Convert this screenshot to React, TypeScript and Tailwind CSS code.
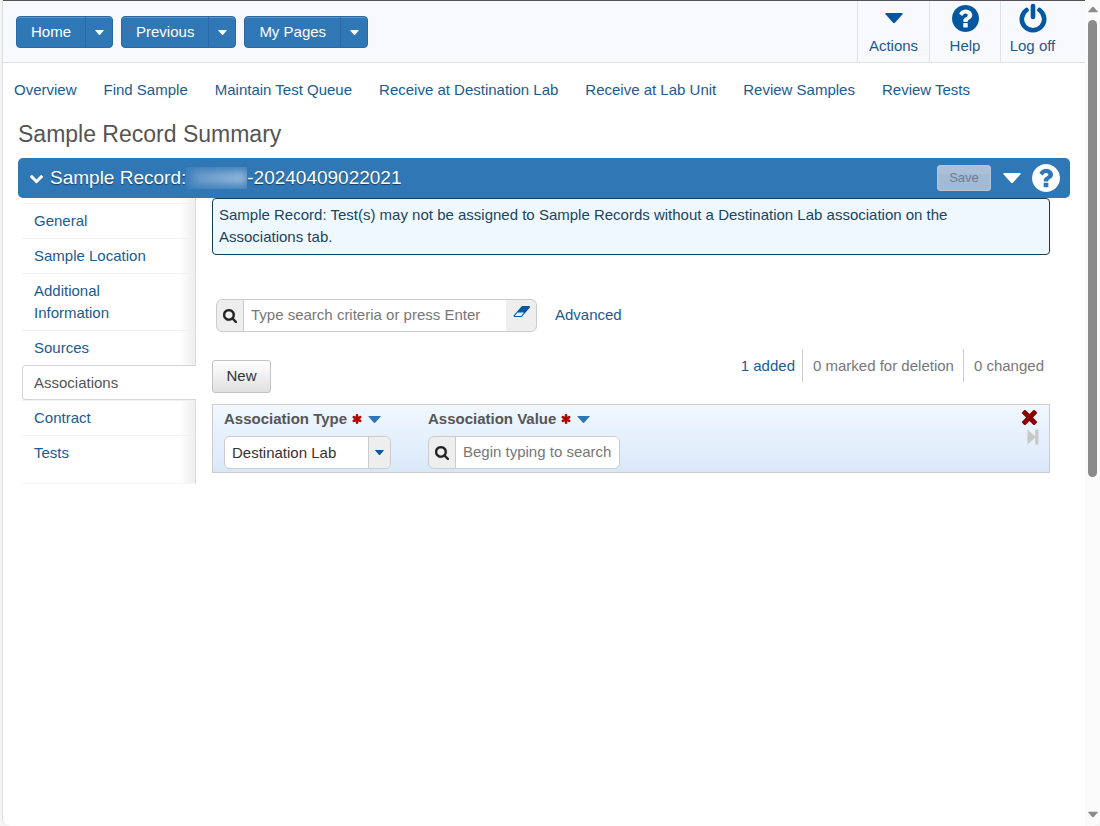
import React, { useState } from "react";

type IconProps = { className?: string };

const navButtons = ["Home", "Previous", "My Pages"];

const quickLinks = [
  "Overview",
  "Find Sample",
  "Maintain Test Queue",
  "Receive at Destination Lab",
  "Receive at Lab Unit",
  "Review Samples",
  "Review Tests",
];

const tabs = ["General", "Sample Location", "Additional Information", "Sources", "Associations", "Contract", "Tests"];

const Caret = ({ className }: IconProps) => (
  <svg viewBox="0 0 18 10" className={className} fill="currentColor" aria-hidden="true">
    <path d="M1 0H17Q18.500 0 17.500 1.200L10.200 9.400Q9 10.500 7.800 9.400L.5 1.200Q-.5 0 1 0Z" />
  </svg>
);

const SearchIcon = ({ className }: IconProps) => (
  <svg viewBox="64 128 1664 1664" className={className} fill="currentColor" stroke="currentColor" strokeWidth="30" aria-hidden="true">
    <path d="M1216 832q0-185-131.500-316.500t-316.500-131.500-316.500 131.500-131.500 316.500 131.500 316.500 316.500 131.500 316.500-131.500 131.500-316.500zm512 832q0 52-38 90t-90 38q-54 0-90-38l-343-342q-179 124-399 124-143 0-273.500-55.500t-225-150-150-225-55.500-273.500 55.500-273.500 150-225 225-150 273.500-55.500 273.500 55.500 225 150 150 225 55.500 273.500q0 220-124 399l343 343q37 37 37 90z" />
  </svg>
);

const ChevronIcon = ({ className }: IconProps) => (
  <svg viewBox="0 300 1792 1340" className={className} fill="currentColor" aria-hidden="true">
    <path d="M1683 808l-742 741q-19 19-45 19t-45-19l-742-741q-19-19-19-45.500t19-45.500l166-165q19-19 45-19t45 19l531 531 531-531q19-19 45-19t45 19l166 165q19 19 19 45.500t-19 45.500z" />
  </svg>
);

const HelpIcon = ({ className }: IconProps) => (
  <svg viewBox="128 128 1536 1536" className={className} fill="currentColor" aria-hidden="true">
    <path d="M1024 1376v-192q0-14-9-23t-23-9h-192q-14 0-23 9t-9 23v192q0 14 9 23t23 9h192q14 0 23-9t9-23zm256-672q0-88-55.500-163t-138.500-116-170-41q-243 0-371 213-15 24 8 42l132 100q7 6 19 6 16 0 25-12 53-68 86-92 34-24 86-24 48 0 85.500 26t37.500 59q0 38-20 61t-68 45q-63 28-115.500 86.500t-52.500 125.500v36q0 14 9 23t23 9h192q14 0 23-9t9-23q0-19 21.500-49.500t54.500-49.500q32-18 49-28.500t46-35 44.500-48 28-60.500 12.500-81zm384 192q0 209-103 385.500t-279.500 279.500-385.500 103-385.500-103-279.500-279.500-103-385.500 103-385.500 279.500-279.500 385.500-103 385.500 103 279.500 279.500 103 385.500z" />
  </svg>
);

const PowerIcon = ({ className }: IconProps) => (
  <svg viewBox="0 0 28 30" className={className} fill="none" stroke="currentColor" strokeWidth="4.600" strokeLinecap="round" aria-hidden="true">
    <path d="M14 3v11M7.500 7A11.200 11.200 0 1 0 20.500 7" />
  </svg>
);

const AsteriskIcon = ({ className }: IconProps) => (
  <svg viewBox="0 0 16 16" className={className} stroke="currentColor" strokeWidth="4" strokeLinecap="round" aria-hidden="true">
    <path d="M8 2v12M2.800 5l10.400 6M13.200 5L2.800 11" />
  </svg>
);

const EraserIcon = ({ className }: IconProps) => (
  <svg viewBox="0 256 1984 1280" className={className} fill="currentColor" aria-hidden="true">
    <path d="M960 1408l336-384h-768l-336 384h768zm1013-1077q15 34 9.500 71.500t-30.500 65.500l-896 1024q-38 44-96 44h-768q-38 0-69.500-20.500t-47.500-54.500q-15-34-9.500-71.500t30.500-65.500l896-1024q38-44 96-44h768q38 0 69.500 20.500t47.500 54.500z" />
  </svg>
);

const CrossIcon = ({ className }: IconProps) => (
  <svg viewBox="302 366 1188 1188" className={className} fill="currentColor" aria-hidden="true">
    <path d="M1490 1322q0 40-28 68l-136 136q-28 28-68 28t-68-28l-294-294-294 294q-28 28-68 28t-68-28l-136-136q-28-28-28-68t28-68l294-294-294-294q-28-28-28-68t28-68l136-136q28-28 68-28t68 28l294 294 294-294q28-28 68-28t68 28l136 136q28 28 28 68t-28 68l-294 294 294 294q28 28 28 68z" />
  </svg>
);

const StepIcon = ({ className }: IconProps) => (
  <svg viewBox="0 0 12 16" className={className} fill="currentColor" aria-hidden="true">
    <path d="M.5.4v15.200L8.200 8.600V15.500h3.300V.5H8.200v6.900z" />
  </svg>
);

const FieldLabel = ({ id, text }: { id: string; text: string }) => (
  <div className="flex items-center">
    <label htmlFor={id} className="font-bold text-[#555]">
      {text}
    </label>
    <AsteriskIcon className="ml-[5px] size-[10px] text-[#b30000]" />
    <button type="button" aria-label={`${text} options`} className="ml-[6px] text-[#2f76b5]">
      <Caret className="h-[7px] w-[13px]" />
    </button>
  </div>
);

const Header = () => (
  <header className="flex justify-between border-t border-b border-t-[#55525a] border-b-[#e0e3e6] bg-[#f8f9fc]">
    <div className="flex gap-2 pt-[15px] pl-[13px]">
      {navButtons.map((name) => (
        <div
          key={name}
          className="flex h-8 rounded border border-[#2a69a5] bg-[#3077b6] text-white shadow-[inset_0_1px_0_#5c95c8] [text-shadow:0_1px_1px_rgba(0,0,0,.5)]">
          <button type="button" className="px-[14px]">
            {name}
          </button>
          <button type="button" aria-label={`${name} menu`} className="flex w-[27px] items-center justify-center border-l border-[#2a69a5]">
            <Caret className="h-[5px] w-[9px]" />
          </button>
        </div>
      ))}
    </div>
    <div className="flex h-[61px] pr-[21px] text-[#1c5a90]">
      <button type="button" className="flex w-[72px] flex-col items-center border-l border-[#e0e3e6]">
        <span className="flex h-[34px] items-center text-[#02579e]">
          <Caret className="h-[10px] w-[18px]" />
        </span>
        Actions
      </button>
      <button type="button" className="flex w-[71px] flex-col items-center border-l border-[#e0e3e6]">
        <span className="flex h-[34px] items-center text-[#02579e]">
          <HelpIcon className="size-[27px]" />
        </span>
        Help
      </button>
      <button type="button" className="flex w-16 flex-col items-center border-l border-[#e0e3e6]">
        <span className="flex h-[34px] items-center text-[#02579e]">
          <PowerIcon className="h-[30px] w-7" />
        </span>
        Log off
      </button>
    </div>
  </header>
);

const TitleBar = () => (
  <div className="flex h-10 items-center justify-between rounded-[5px] bg-[#3077b6] pr-[10px] pl-[11px] text-white">
    <div className="flex items-center">
      <button type="button" aria-label="Collapse" className="mr-[6px]">
        <ChevronIcon className="h-[11px] w-[15px]" />
      </button>
      <h2 className="flex items-center text-[19px] [text-shadow:0_1px_1px_rgba(0,0,0,.5)]">
        Sample Record:
        {/* user name is masked */}
        <span className="flex h-[22px] w-[61px] items-center overflow-hidden bg-[#3b7eba]">
          <span className="ml-[6px] h-[14px] w-full bg-linear-to-r from-[#6397c8] to-[#9bbcdb] blur-[4px]" />
        </span>
        -20240409022021
      </h2>
    </div>
    <div className="flex items-center">
      <button
        type="button"
        disabled
        className="h-[26px] w-[54px] rounded-[3px] border border-[#b3c6da] bg-[#a2bad3] text-[13px] text-[#6c7f96] shadow-[inset_0_8px_0_#abc0d7]">
        Save
      </button>
      <button type="button" aria-label="More actions" className="mr-[11px] ml-3">
        <Caret className="h-[10px] w-[18px]" />
      </button>
      <button type="button" aria-label="Help">
        <HelpIcon className="size-7" />
      </button>
    </div>
  </div>
);

const Sidebar = ({ active, onSelect }: { active: string; onSelect: (tab: string) => void }) => (
  <nav className="flex w-[174px] shrink-0 flex-col self-start">
    <div className="h-[5px] border-r border-[#d9d9d9] bg-linear-to-l from-[#eeeeee] to-white to-[16px]" />
    {tabs.map((tab) =>
      tab === active ? (
        <a
          key={tab}
          href="#"
          aria-current="page"
          className="rounded-l border border-r-0 border-[#d4d4d4] bg-white pt-[6px] pr-6 pb-[5px] pl-[11px] text-[#555]">
          {tab}
        </a>
      ) : (
        <a
          key={tab}
          href="#"
          onClick={() => onSelect(tab)}
          className="border-t border-r border-t-[#f0f0f0] border-r-[#d9d9d9] bg-linear-to-l from-[#eeeeee] to-white to-[16px] py-[6px] pr-10 pl-3 text-[#1c5a90]">
          {tab}
        </a>
      )
    )}
    <div className="h-[14px] border-r border-b border-r-[#d9d9d9] border-b-[#f5f5f5] bg-linear-to-l from-[#eeeeee] to-white to-[16px]" />
  </nav>
);

const Scrollbar = () => (
  <div className="flex w-[15px] shrink-0 flex-col items-center bg-[#fbfbfb] py-[6px] text-[#8b8b8b]" aria-hidden="true">
    <Caret className="h-[7px] w-[10px] rotate-180" />
    <div className="my-[7px] w-full flex-1">
      <div className="mx-auto h-7/12 w-[9px] rounded-full bg-[#8b8b8b]" />
    </div>
    <Caret className="mb-[2px] h-[7px] w-[10px]" />
  </div>
);

const App = () => {
  const [activeTab, setActiveTab] = useState("Associations");
  const [criteria, setCriteria] = useState("");

  return (
    <div className="flex min-h-screen bg-[#f5f5f5] pl-[2px] font-['Liberation_Sans',Arial,sans-serif] text-[15px] leading-[22px]">
      <div className="flex min-w-0 flex-1 overflow-hidden rounded-b-lg border-l border-[#dedede] bg-white">
        <div className="min-w-0 flex-1">
          <Header />
          <nav className="flex flex-wrap gap-x-[27px] pt-4 pl-[11px] whitespace-nowrap text-[#1c5a90]">
            {quickLinks.map((link) => (
              <a key={link} href="#">
                {link}
              </a>
            ))}
          </nav>
          <main className="px-[15px]">
            <h1 className="mt-[18px] mb-[9px] text-[23px] leading-[30px] text-[#555]">Sample Record Summary</h1>
            <TitleBar />
            <div className="flex gap-4 pr-5 pl-1">
              <Sidebar active={activeTab} onSelect={setActiveTab} />
              <section className="min-w-0 flex-1">
                <div
                  role="alert"
                  className="rounded border border-[#123f5f] bg-[#f0f8ff] pt-[5px] pr-10 pb-[6px] pl-[6px] text-[#1a4460]">
                  Sample Record: Test(s) may not be assigned to Sample Records without a Destination Lab association on the
                  Associations tab.
                </div>

                <form className="mt-11 ml-1 flex items-center" onSubmit={(e) => e.preventDefault()}>
                  <div className="flex h-[33px] w-[321px] overflow-hidden rounded-md border border-[#ccc] bg-[#eee]">
                    <button type="submit" aria-label="Search" className="flex w-[26px] items-center justify-center text-[#222]">
                      <SearchIcon className="size-[14px]" />
                    </button>
                    <input
                      type="text"
                      aria-label="Search criteria"
                      placeholder="Type search criteria or press Enter"
                      value={criteria}
                      onChange={(e) => setCriteria(e.target.value)}
                      className="min-w-0 flex-1 border-l border-[#ccc] bg-white px-[7px] pb-[2px] placeholder:text-[#777]"
                    />
                    <button
                      type="button"
                      aria-label="Clear"
                      onClick={() => setCriteria("")}
                      className="flex w-[30px] justify-center pt-[6px] text-[#02579e]">
                      <EraserIcon className="h-[11px] w-[17px]" />
                    </button>
                  </div>
                  <a href="#" className="ml-[18px] pb-[2px] text-[#1c5a90]">
                    Advanced
                  </a>
                </form>

                <div className="mt-[17px] flex items-start justify-between">
                  <button
                    type="button"
                    className="mt-[11px] h-[33px] w-[59px] rounded-[3px] border border-[#c4c4c4] bg-linear-to-b from-white to-[#e0e0e0] pb-[2px] text-[#333]">
                    New
                  </button>
                  <div className="flex pr-[6px] leading-[33px] text-[#777]">
                    <a href="#" className="pr-[7px] text-[#1c5a90]">
                      1 added
                    </a>
                    <span className="border-l border-[#ccc] pr-[9px] pl-[10px]">0 marked for deletion</span>
                    <span className="border-l border-[#ccc] pl-[10px]">0 changed</span>
                  </div>
                </div>

                <div className="mt-[11px] flex justify-between border border-[#ccc] bg-linear-to-b from-[#f1f8fe] to-[#d9e8f9] pt-[3px] pr-[10px] pb-[3px] pl-[11px]">
                  <div className="flex gap-[37px]">
                    <div>
                      <FieldLabel id="assoc-type" text="Association Type" />
                      <div className="relative mt-[6px] w-[167px]">
                        <select
                          id="assoc-type"
                          className="h-[33px] w-full appearance-none rounded-md border border-[#ccc] bg-white pl-[7px] text-[#333]">
                          <option>Destination Lab</option>
                        </select>
                        <span className="pointer-events-none absolute inset-y-px right-px flex w-[22px] items-center justify-center rounded-r-[5px] border-l border-[#ccc] bg-[#eee] text-[#02579e]">
                          <Caret className="h-[5px] w-[9px]" />
                        </span>
                      </div>
                    </div>
                    <div>
                      <FieldLabel id="assoc-value" text="Association Value" />
                      <div className="mt-[6px] flex h-[33px] w-48 overflow-hidden rounded-md border border-[#ccc] bg-[#eee]">
                        <button type="button" aria-label="Look up value" className="flex w-[26px] items-center justify-center text-[#222]">
                          <SearchIcon className="size-[14px]" />
                        </button>
                        <input
                          id="assoc-value"
                          type="text"
                          placeholder="Begin typing to search"
                          className="min-w-0 flex-1 border-l border-[#ccc] bg-white px-[7px] pb-[2px] placeholder:text-[#777]"
                        />
                      </div>
                    </div>
                  </div>
                  <div className="flex flex-col items-end pt-[2px]">
                    <button type="button" aria-label="Delete row" className="mr-[2px] text-[#8b0000]">
                      <CrossIcon className="size-[15px]" />
                    </button>
                    <button type="button" aria-label="Next row" className="mt-1 text-[#c8c8c8]">
                      <StepIcon className="h-4 w-3" />
                    </button>
                  </div>
                </div>
              </section>
            </div>
          </main>
        </div>
        <Scrollbar />
      </div>
    </div>
  );
};

export default App;
